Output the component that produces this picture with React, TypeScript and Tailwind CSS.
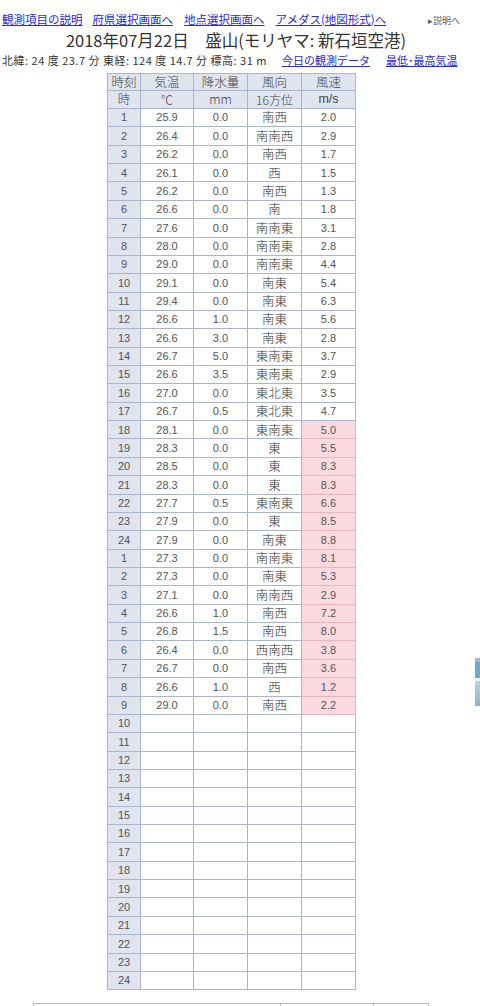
import React from "react";

type Row = [string, string, string, string, string, boolean];

const DAY1: Row[] = [
  ["1", "25.9", "0.0", "南西", "2.0", false],
  ["2", "26.4", "0.0", "南南西", "2.9", false],
  ["3", "26.2", "0.0", "南西", "1.7", false],
  ["4", "26.1", "0.0", "西", "1.5", false],
  ["5", "26.2", "0.0", "南西", "1.3", false],
  ["6", "26.6", "0.0", "南", "1.8", false],
  ["7", "27.6", "0.0", "南南東", "3.1", false],
  ["8", "28.0", "0.0", "南南東", "2.8", false],
  ["9", "29.0", "0.0", "南南東", "4.4", false],
  ["10", "29.1", "0.0", "南東", "5.4", false],
  ["11", "29.4", "0.0", "南東", "6.3", false],
  ["12", "26.6", "1.0", "南東", "5.6", false],
  ["13", "26.6", "3.0", "南東", "2.8", false],
  ["14", "26.7", "5.0", "東南東", "3.7", false],
  ["15", "26.6", "3.5", "東南東", "2.9", false],
  ["16", "27.0", "0.0", "東北東", "3.5", false],
  ["17", "26.7", "0.5", "東北東", "4.7", false],
  ["18", "28.1", "0.0", "東南東", "5.0", true],
  ["19", "28.3", "0.0", "東", "5.5", true],
  ["20", "28.5", "0.0", "東", "8.3", true],
  ["21", "28.3", "0.0", "東", "8.3", true],
  ["22", "27.7", "0.5", "東南東", "6.6", true],
  ["23", "27.9", "0.0", "東", "8.5", true],
  ["24", "27.9", "0.0", "南東", "8.8", true],
];

const DAY2: Row[] = [
  ["1", "27.3", "0.0", "南南東", "8.1", true],
  ["2", "27.3", "0.0", "南東", "5.3", true],
  ["3", "27.1", "0.0", "南南西", "2.9", true],
  ["4", "26.6", "1.0", "南西", "7.2", true],
  ["5", "26.8", "1.5", "南西", "8.0", true],
  ["6", "26.4", "0.0", "西南西", "3.8", true],
  ["7", "26.7", "0.0", "南西", "3.6", true],
  ["8", "26.6", "1.0", "西", "1.2", true],
  ["9", "29.0", "0.0", "南西", "2.2", true],
];

const EMPTY: Row[] = Array.from({ length: 15 }, (_, i) => [String(i + 10), "", "", "", "", false] as Row);

const ROWS = [...DAY1, ...DAY2, ...EMPTY];

const cell = "border border-[#aab4cc] text-center align-middle p-0";
const head = `${cell} bg-[#dfe4ee] text-[12.5px] text-[#444] leading-none font-light`;
const num = "text-[11px] text-[#555] font-['Liberation_Sans',sans-serif]";

export default function App() {
  return (
    <div className="relative w-[480px] h-[1006px] overflow-hidden bg-white text-[#333] font-['Noto_Sans_CJK_JP','Liberation_Sans',sans-serif]">
      {/* ナビ */}
      <div className="flex items-end h-[25px] pl-[2px] text-[11.5px] leading-none">
        <a className="text-[#2a2ad0] underline mr-[10px]">観測項目の説明</a>
        <a className="text-[#2a2ad0] underline mr-[11px]">府県選択画面へ</a>
        <a className="text-[#2a2ad0] underline mr-[11px]">地点選択画面へ</a>
        <a className="text-[#2a2ad0] underline">アメダス(地図形式)へ</a>
        <span className="ml-auto mr-[20px] text-[9px] text-[#555]">▸説明へ</span>
      </div>

      {/* タイトル */}
      <div className="h-[27px] flex items-center justify-center text-[16.5px] leading-none text-[#333] pr-[8px] pt-[3px]">
        2018年07月22日　盛山(モリヤマ: 新石垣空港)
      </div>

      {/* 位置情報 */}
      <div className="flex items-center h-[16px] pl-[2px] text-[11px] leading-none whitespace-nowrap">
        <span className="tracking-[0.5px]">北緯: 24 度 23.7 分 東経: 124 度 14.7 分 標高: 31 m</span>
        <a className="text-[#2a2ad0] underline ml-[15px]">今日の観測データ</a>
        <a className="text-[#2a2ad0] underline ml-[16px]">最低･最高気温</a>
      </div>

      {/* 観測表 */}
      <table className="ml-[107px] mt-[5px] border-collapse w-[248px] table-fixed">
        <colgroup>
          <col className="w-[33px]" />
          <col className="w-[53px]" />
          <col className="w-[54px]" />
          <col className="w-[54px]" />
          <col className="w-[54px]" />
        </colgroup>
        <thead>
          <tr className="h-[17px]">
            <th className={`${head}`}>時刻</th>
            <th className={`${head}`}>気温</th>
            <th className={`${head}`}>降水量</th>
            <th className={`${head}`}>風向</th>
            <th className={`${head}`}>風速</th>
          </tr>
          <tr className="h-[18px]">
            <th className={`${head}`}>時</th>
            <th className={`${head} text-[12px]`}>℃</th>
            <th className={`${head} text-[10px]`}>mm</th>
            <th className={`${head} text-[12px]`}>16方位</th>
            <th className={`${head} text-[11px] font-['Liberation_Sans',sans-serif]`}>m/s</th>
          </tr>
        </thead>
        <tbody>
          {ROWS.map((r, i) => (
            <tr key={i} className="h-[18.36px]">
              <td className={`${cell} bg-[#dfe4ef] ${num}`}>{r[0]}</td>
              <td className={`${cell} ${num}`}>{r[1]}</td>
              <td className={`${cell} ${num}`}>{r[2]}</td>
              <td className={`${cell} text-[12.5px] text-[#333] leading-none font-light`}>{r[3]}</td>
              <td className={`${cell} ${num} ${r[5] ? "bg-[#fbdadf] border-[#e8b4bd]" : ""}`}>{r[4]}</td>
            </tr>
          ))}
        </tbody>
      </table>

      {/* 下の表 */}
      <div className="ml-[33px] mt-[13px] w-[396px] h-[10px] flex border-t border-l border-r border-[#aab4cc]">
        <div className="w-[247px] border-r border-[#aab4cc]" />
        <div className="w-[93px] border-r border-[#aab4cc]" />
        <div className="flex-1" />
      </div>

      {/* 右端の画像片 */}
      <div className="absolute left-[475px] top-[658px] w-[5px] h-[48px] flex flex-col">
        <div className="h-[4px] bg-[#9fb7c6]" />
        <div className="h-[16px] bg-[#6fa9c8]" />
        <div className="h-[3px] bg-[#e6eef2]" />
        <div className="flex-1 bg-gradient-to-b from-[#b9d3df] to-[#8fb4c7]" />
      </div>
    </div>
  );
}
